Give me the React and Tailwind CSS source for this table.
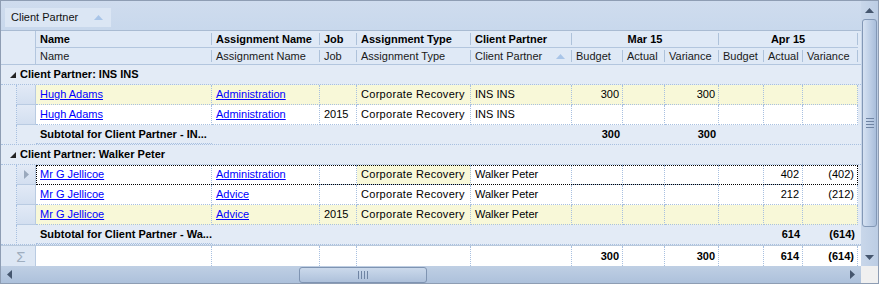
import React from 'react';

const W = [
  'w-[176px]',
  'w-[108px]',
  'w-[37px]',
  'w-[114px]',
  'w-[101px]',
  'w-[51px]',
  'w-[42px]',
  'w-[54px]',
  'w-[45px]',
  'w-[39px]',
  'w-[55px]',
];

const SUB = ['Name', 'Assignment Name', 'Job', 'Assignment Type', 'Client Partner', 'Budget', 'Actual', 'Variance', 'Budget', 'Actual', 'Variance'];

const groups = [
  {
    title: 'Client Partner: INS INS',
    rows: [
      { name: 'Hugh Adams', asg: 'Administration', job: '', type: 'Corporate Recovery', partner: 'INS INS', vals: ['300', '', '300', '', '', ''], yellow: true },
      { name: 'Hugh Adams', asg: 'Administration', job: '2015', type: 'Corporate Recovery', partner: 'INS INS', vals: ['', '', '', '', '', ''] },
    ],
    subtotal: { label: 'Subtotal for Client Partner - IN...', vals: ['300', '', '300', '', '', ''] },
  },
  {
    title: 'Client Partner: Walker Peter',
    rows: [
      { name: 'Mr G Jellicoe', asg: 'Administration', job: '', type: 'Corporate Recovery', partner: 'Walker Peter', vals: ['', '', '', '', '402', '(402)'], focused: true },
      { name: 'Mr G Jellicoe', asg: 'Advice', job: '', type: 'Corporate Recovery', partner: 'Walker Peter', vals: ['', '', '', '', '212', '(212)'] },
      { name: 'Mr G Jellicoe', asg: 'Advice', job: '2015', type: 'Corporate Recovery', partner: 'Walker Peter', vals: ['', '', '', '', '', ''], yellow: true },
    ],
    subtotal: { label: 'Subtotal for Client Partner - Wa...', vals: ['', '', '', '', '614', '(614)'] },
  },
];

const totals = ['300', '', '300', '', '614', '(614)'];

const SortUp = () => (
  <svg width="9" height="5" viewBox="0 0 9 5" className="shrink-0">
    <polygon points="0,5 4.5,0 9,5" fill="#a9c5e8" />
  </svg>
);

const Sep = () => <div className="w-px h-[12px] bg-[#aec2da] shrink-0" />;

const Cell = ({ w, bg, children, right, bold, border = true }) => (
  <div
    className={`${w} shrink-0 h-full flex items-center px-[3px] border-b border-dotted border-[#a8c0e0] ${border ? 'border-r' : ''} ${bg} ${right ? 'justify-end' : ''} ${bold ? 'font-bold' : ''}`}
  >
    {children}
  </div>
);

const Link = ({ children }) => <span className="pl-px text-[#0000ff] underline whitespace-nowrap">{children}</span>;

const DataRow = ({ r }) => {
  const base = r.yellow ? 'bg-[#f8f8d8]' : 'bg-white';
  return (
    <div className="flex h-[20px]">
      <div className="w-[16px] shrink-0 border-r border-dotted border-[#a8c0e0]" />
      <div className="w-[19px] shrink-0 flex items-center justify-center bg-gradient-to-b from-[#e2eaf6] to-[#d3dff0] border-r border-b border-[#b9cbe2]">
        {r.focused && (
          <svg width="5" height="9" viewBox="0 0 5 9">
            <polygon points="0,0 5,4.5 0,9" fill="#9aa9bd" />
          </svg>
        )}
      </div>
      <div className={`flex h-full ${r.focused ? 'outline-1 outline-dotted outline-black -outline-offset-1' : ''}`}>
        <Cell w={W[0]} bg={base}><Link>{r.name}</Link></Cell>
        <Cell w={W[1]} bg={base}><Link>{r.asg}</Link></Cell>
        <Cell w={W[2]} bg={base}><span className="pl-px">{r.job}</span></Cell>
        <Cell w={W[3]} bg={r.focused ? 'bg-[#f8f8d8]' : base}><span className="pl-px whitespace-nowrap tracking-[0.3px]">{r.type}</span></Cell>
        <Cell w={W[4]} bg={base}><span className="pl-px whitespace-nowrap">{r.partner}</span></Cell>
        {r.vals.map((v, i) => (
          <Cell key={i} w={W[5 + i]} bg={base} right>{v}</Cell>
        ))}
      </div>
    </div>
  );
};

const GroupRow = ({ title }) => (
  <div className="flex items-center h-[20px] border-b border-dotted border-[#a8c0e0]">
    <svg width="6" height="6" viewBox="0 0 6 6" className="ml-[9px] mr-[4px] mt-px">
      <polygon points="6,0 6,6 0,6" fill="#222" />
    </svg>
    <span className="font-bold whitespace-nowrap">{title}</span>
  </div>
);

const SubtotalRow = ({ s }) => (
  <div className="flex h-[20px] border-b border-dotted border-[#a8c0e0]">
    <div className="w-[16px] shrink-0 border-r border-dotted border-[#a8c0e0] -mb-px" />
    <div className="w-[19px] shrink-0" />
    <Cell w={W[0]} bg="" bold border={false}><span className="pl-px whitespace-nowrap">{s.label}</span></Cell>
    <div className="w-[360px] shrink-0" />
    {s.vals.map((v, i) => (
      <div key={i} className={`${W[5 + i]} shrink-0 flex items-center justify-end px-[3px] font-bold`}>{v}</div>
    ))}
  </div>
);

export default function App() {
  return (
    <div className="w-[880px] h-[284px] bg-white font-['Liberation_Sans',Arial,sans-serif] text-[11px] text-black leading-none">
      <div className="w-[879px] h-[284px] border border-[#8e9db3] flex flex-col bg-[#e3ebf6]">
        <div className="flex h-[265px]">
          <div className="w-[860px] shrink-0 flex flex-col">
            {/* group-by panel */}
            <div className="h-[30px] shrink-0 bg-gradient-to-b from-[#cfdcee] to-[#c8d8ec] border-b border-[#a9bbd2] pt-[7px] pl-[4px]">
              <div className="w-[106px] h-[19px] bg-[#dbe6f4] flex items-center pl-[6px] pr-[8px] text-[#111]">
                <span className="flex-1">Client Partner</span>
                <SortUp />
              </div>
            </div>

            {/* column headers */}
            <div className="flex h-[34px] shrink-0 bg-[#dfe9f6]">
              <div className="w-[35px] shrink-0 border-r border-b border-[#b3c6de] bg-[#e1eaf6]" />
              <div className="flex flex-col">
                <div className="flex h-[17px] border-b border-[#b3c6de] font-bold">
                  {['Name', 'Assignment Name', 'Job', 'Assignment Type', 'Client Partner'].map((t, i) => (
                    <div key={t} className={`${W[i]} shrink-0 flex items-center pl-[4px]`}>
                      <span className="flex-1 whitespace-nowrap">{t}</span>
                      <Sep />
                    </div>
                  ))}
                  <div className="w-[147px] shrink-0 flex items-center">
                    <span className="flex-1 text-center">Mar 15</span>
                    <Sep />
                  </div>
                  <div className="w-[139px] shrink-0 flex items-center">
                    <span className="flex-1 text-center">Apr 15</span>
                    <Sep />
                  </div>
                </div>
                <div className="flex h-[17px] border-b border-[#b3c6de] text-[#1a1a1a]">
                  {SUB.map((t, i) => (
                    <div key={i} className={`${W[i]} shrink-0 flex items-center pl-[4px]`}>
                      <span className="flex-1 whitespace-nowrap">{t}</span>
                      {i === 4 && <span className="mr-[6px]"><SortUp /></span>}
                      <Sep />
                    </div>
                  ))}
                </div>
              </div>
              <div className="flex-1 border-b border-[#b3c6de]" />
            </div>

            {/* body */}
            <div className="flex-1 flex flex-col">
              {groups.map((g) => (
                <div key={g.title} className="flex flex-col">
                  <GroupRow title={g.title} />
                  {g.rows.map((r, i) => (
                    <DataRow key={i} r={r} />
                  ))}
                  <SubtotalRow s={g.subtotal} />
                </div>
              ))}
            </div>

            {/* footer totals */}
            <div className="flex h-[21px] shrink-0 border-t border-[#b9c9dc]">
              <div className="w-[35px] shrink-0 flex items-center justify-center bg-[#dde7f4] border-r border-[#b9cbe2] text-[15px] text-[#9faebf] pl-[6px]">Σ</div>
              <div className="flex bg-white">
                {W.map((w, i) => (
                  <div key={i} className={`${w} shrink-0 h-full flex items-center justify-end px-[3px] font-bold border-r border-dotted border-[#a8c0e0]`}>
                    {i >= 5 ? totals[i - 5] : ''}
                  </div>
                ))}
              </div>
              <div className="flex-1 bg-white" />
            </div>
          </div>

          {/* vertical scrollbar */}
          <div className="w-[17px] shrink-0 flex flex-col bg-gradient-to-r from-[#c9d7ea] to-[#bccde4]">
            <div className="h-[18px] flex items-center justify-center">
              <svg width="9" height="5" viewBox="0 0 9 5">
                <polygon points="0,5 4.5,0 9,5" fill="#45566e" />
              </svg>
            </div>
            <div className="mx-px h-[208px] rounded-[3px] border border-[#8398b6] bg-gradient-to-r from-[#d6e2f2] via-[#bfd0e7] to-[#a9bedb] flex flex-col items-center justify-center gap-[2px]">
              <div className="w-[8px] h-px bg-[#6f84a3]" />
              <div className="w-[8px] h-px bg-[#6f84a3]" />
              <div className="w-[8px] h-px bg-[#6f84a3]" />
              <div className="w-[8px] h-px bg-[#6f84a3]" />
            </div>
            <div className="flex-1" />
            <div className="h-[18px] flex items-center justify-center">
              <svg width="9" height="5" viewBox="0 0 9 5">
                <polygon points="0,0 9,0 4.5,5" fill="#45566e" />
              </svg>
            </div>
          </div>
        </div>

        {/* horizontal scrollbar */}
        <div className="flex h-[17px] shrink-0">
          <div className="w-[860px] shrink-0 flex items-center bg-gradient-to-b from-[#bfcfe4] to-[#adc1db]">
            <div className="w-[17px] h-full flex items-center justify-center">
              <svg width="5" height="9" viewBox="0 0 5 9">
                <polygon points="5,0 0,4.5 5,9" fill="#45566e" />
              </svg>
            </div>
            <div className="w-[280px] shrink-0" />
            <div className="w-[128px] h-[16px] rounded-[3px] border border-[#7f94b2] bg-gradient-to-b from-[#cbd9eb] to-[#aec1db] flex items-center justify-center gap-[2px] ml-[1px]">
              <div className="w-px h-[8px] bg-[#6f84a3]" />
              <div className="w-px h-[8px] bg-[#6f84a3]" />
              <div className="w-px h-[8px] bg-[#6f84a3]" />
              <div className="w-px h-[8px] bg-[#6f84a3]" />
            </div>
            <div className="flex-1" />
            <div className="w-[17px] h-full flex items-center justify-center">
              <svg width="5" height="9" viewBox="0 0 5 9">
                <polygon points="0,0 5,4.5 0,9" fill="#45566e" />
              </svg>
            </div>
          </div>
          <div className="flex-1 bg-[#f0f0f0]" />
        </div>
      </div>
    </div>
  );
}
